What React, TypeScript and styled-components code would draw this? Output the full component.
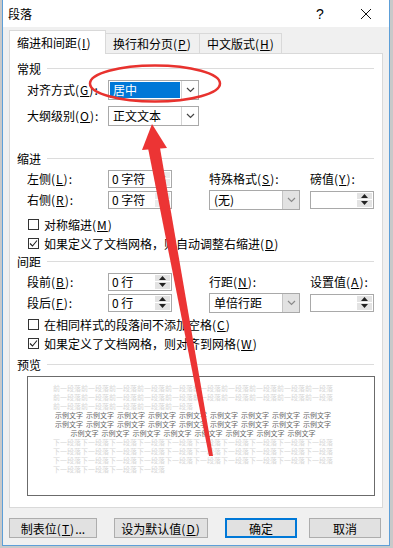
import React from "react";
import styled, { createGlobalStyle } from "styled-components";

const GlobalStyle = createGlobalStyle`
  html, body {
    margin: 0;
    padding: 0;
    background: #c9c9c9;
  }
  body {
    font-family: "Noto Sans CJK SC", "Noto Sans", sans-serif;
    font-size: 12px;
    color: #000;
  }
`;

const Stage = styled.div`
  position: relative;
  width: 393px;
  height: 548px;
  overflow: hidden;
`;

const Dialog = styled.div`
  margin-left: 2px;
  width: 386px;
  height: 545px;
  border: 1px solid #5d9fd8;
  border-top: none;
  background: #f0f0f0;
  display: flex;
  flex-direction: column;
`;

const TitleBar = styled.div`
  height: 27px;
  background: #fff;
  display: flex;
  align-items: center;
  padding-left: 5px;
`;

const Title = styled.div`
  flex: 1;
`;

const CaptionBtn = styled.div`
  width: 46px;
  height: 27px;
  display: flex;
  align-items: center;
  justify-content: center;
  font-size: 14px;
  font-family: "Liberation Sans", sans-serif;
`;

const TabBar = styled.div`
  display: flex;
  align-items: flex-end;
  padding: 3px 6px 0;
  height: 24px;
  margin-bottom: -1px;
  position: relative;
  z-index: 1;
`;

const Tab = styled.div<{ $w: number; $active?: boolean }>`
  width: ${(p) => p.$w}px;
  height: ${(p) => (p.$active ? 24 : 21)}px;
  box-sizing: border-box;
  padding-left: 7px;
  border: 1px solid #d9d9d9;
  border-bottom: ${(p) => (p.$active ? "none" : "1px solid #d9d9d9")};
  border-left: ${(p) => (p.$active ? "1px solid #d9d9d9" : "none")};
  background: ${(p) => (p.$active ? "#fff" : "#f0f0f0")};
  display: flex;
  align-items: center;
  white-space: nowrap;
`;

const Panel = styled.div`
  margin: 0 6px;
  height: 455px;
  box-sizing: border-box;
  border: 1px solid #d9d9d9;
  background: #fff;
  padding: 6px 8px 0 7px;
`;

const SectionHead = styled.div<{ $mt?: number }>`
  display: flex;
  align-items: center;
  gap: 6px;
  height: 16px;
  margin-top: ${(p) => p.$mt ?? 0}px;
  &::after {
    content: "";
    flex: 1;
    height: 1px;
    background: #dcdcdc;
  }
`;

const FieldGrid = styled.div<{ $gap?: number; $mt?: number }>`
  display: grid;
  grid-template-columns: 81px 101px 101px 64px;
  grid-auto-rows: 21px;
  row-gap: ${(p) => p.$gap ?? 0}px;
  align-items: center;
  padding-left: 10px;
  margin-top: ${(p) => p.$mt ?? 0}px;
`;

const Label = styled.div`
  white-space: nowrap;
`;

const Acc = styled.span`
  letter-spacing: 1px;
`;

const Combo = styled.div<{ $h: number }>`
  width: 91px;
  height: ${(p) => p.$h}px;
  box-sizing: border-box;
  border: 1px solid #a9a9a9;
  background: #fff;
  display: flex;
  align-items: center;
`;

const ComboText = styled.div<{ $sel?: boolean }>`
  flex: 1;
  align-self: stretch;
  margin: 1px;
  padding-left: 3px;
  display: flex;
  align-items: center;
  background: ${(p) => (p.$sel ? "#0078d7" : "transparent")};
  color: ${(p) => (p.$sel ? "#fff" : "#000")};
`;

const ComboArrow = styled.div<{ $filled?: boolean }>`
  width: 17px;
  align-self: stretch;
  box-sizing: border-box;
  border-left: 1px solid ${(p) => (p.$filled ? "#c4c4c4" : "#d4d4d4")};
  background: ${(p) => (p.$filled ? "#e2e2e2" : "#fff")};
  display: flex;
  align-items: center;
  justify-content: center;
`;

const Spin = styled.div`
  width: 64px;
  height: 18px;
  box-sizing: border-box;
  border: 1px solid #a9a9a9;
  background: #fff;
  display: flex;
`;

const SpinText = styled.div`
  flex: 1;
  padding-left: 3px;
  display: flex;
  align-items: center;
  white-space: pre;
`;

const SpinBtns = styled.div`
  width: 15px;
  margin: 1px;
  display: flex;
  flex-direction: column;
  gap: 1px;
`;

const SpinBtn = styled.div<{ $dim?: boolean }>`
  flex: 1;
  background: ${(p) => (p.$dim ? "#ebebeb" : "#e3e3e3")};
  display: flex;
  align-items: center;
  justify-content: center;
`;

const CheckRow = styled.div<{ $mt?: number }>`
  display: flex;
  align-items: center;
  gap: 5px;
  height: 19px;
  padding-left: 11px;
  margin-top: ${(p) => p.$mt ?? 0}px;
  white-space: nowrap;
`;

const Box = styled.span`
  width: 11px;
  height: 11px;
  box-sizing: border-box;
  border: 1px solid #333;
  background: #fff;
  display: flex;
  align-items: center;
  justify-content: center;
`;

const Preview = styled.div`
  margin: 4px 0 0 10px;
  width: 348px;
  height: 120px;
  box-sizing: border-box;
  border: 1px solid #6b6b6b;
  background: #fff;
  padding: 7px 0 0 25px;
`;

const PreviewText = styled.div`
  width: 280px;
  font-size: 7px;
  line-height: 9px;
  white-space: nowrap;
`;

const Ghost = styled.div`
  color: #d6d6d6;
`;

const Sample = styled.div`
  color: #666;
  text-align: center;
`;

const Word = styled.span`
  display: inline-block;
  margin: 0 1.5px;
`;

const ButtonRow = styled.div`
  display: flex;
  gap: 17px;
  margin-top: 10px;
  padding-left: 6px;
`;

const ButtonGroup = styled.div`
  display: flex;
  gap: 12px;
`;

const Button = styled.div<{ $w: number; $primary?: boolean }>`
  width: ${(p) => p.$w}px;
  height: 20px;
  box-sizing: border-box;
  border: 1px solid ${(p) => (p.$primary ? "#0078d7" : "#adadad")};
  box-shadow: ${(p) => (p.$primary ? "inset 0 0 0 1px #0078d7" : "none")};
  background: #e1e1e1;
  display: flex;
  align-items: center;
  justify-content: center;
  white-space: nowrap;
`;

const Overlay = styled.svg`
  position: absolute;
  left: 0;
  top: 0;
  pointer-events: none;
`;

const Key = ({ k }: { k: string }) => (
  <Acc>
    (<u>{k}</u>)
  </Acc>
);

const Chevron = ({ color }: { color: string }) => (
  <svg width="9" height="6" viewBox="0 0 9 6">
    <polyline points="1,1 4.5,4.5 8,1" fill="none" stroke={color} strokeWidth="1.2" />
  </svg>
);

const Dropdown = ({ text, h, sel, filled }: { text: string; h: number; sel?: boolean; filled?: boolean }) => (
  <Combo $h={h}>
    <ComboText $sel={sel}>{text}</ComboText>
    <ComboArrow $filled={filled}>
      <Chevron color={filled ? "#8a8a8a" : "#444"} />
    </ComboArrow>
  </Combo>
);

const Spinner = ({ text = "", dim }: { text?: string; dim?: boolean }) => {
  const c = dim ? "#b4b4b4" : "#222";
  return (
    <Spin>
      <SpinText>{text}</SpinText>
      <SpinBtns>
        <SpinBtn $dim={dim}>
          <svg width="7" height="4" viewBox="0 0 7 4">
            <polygon points="0,4 7,4 3.5,0" fill={c} />
          </svg>
        </SpinBtn>
        <SpinBtn $dim={dim}>
          <svg width="7" height="4" viewBox="0 0 7 4">
            <polygon points="0,0 7,0 3.5,4" fill={c} />
          </svg>
        </SpinBtn>
      </SpinBtns>
    </Spin>
  );
};

const Checkbox = ({ checked, children, mt }: { checked?: boolean; children: React.ReactNode; mt?: number }) => (
  <CheckRow $mt={mt}>
    <Box>
      {checked && (
        <svg width="9" height="9" viewBox="0 0 9 9">
          <polyline points="1,4.5 3.5,7 8,1.5" fill="none" stroke="#222" strokeWidth="1.1" />
        </svg>
      )}
    </Box>
    <span>{children}</span>
  </CheckRow>
);

const before = "前一段落".repeat(10);
const after = "下一段落".repeat(10);
const sampleRows = [9, 9, 8];

export default function App() {
  return (
    <Stage>
      <GlobalStyle />
      <Dialog>
        <TitleBar>
          <Title>段落</Title>
          <CaptionBtn>?</CaptionBtn>
          <CaptionBtn>
            <svg width="12" height="12" viewBox="0 0 12 12">
              <path d="M1 1 L11 11 M11 1 L1 11" stroke="#111" strokeWidth="1" />
            </svg>
          </CaptionBtn>
        </TitleBar>

        <TabBar>
          <Tab $w={97} $active>
            缩进和间距<Key k="I" />
          </Tab>
          <Tab $w={94}>
            换行和分页<Key k="P" />
          </Tab>
          <Tab $w={82}>
            中文版式<Key k="H" />
          </Tab>
        </TabBar>

        <Panel>
          <SectionHead>常规</SectionHead>
          <FieldGrid $gap={5} $mt={3}>
            <Label>
              对齐方式<Key k="G" />:
            </Label>
            <Dropdown text="居中" h={20} sel />
            <span />
            <span />
            <Label>
              大纲级别<Key k="O" />:
            </Label>
            <Dropdown text="正文文本" h={20} />
          </FieldGrid>

          <SectionHead $mt={24}>缩进</SectionHead>
          <FieldGrid $mt={2}>
            <Label>
              左侧<Key k="L" />:
            </Label>
            <Spinner text="0 字符" dim />
            <Label>
              特殊格式<Key k="S" />:
            </Label>
            <Label>
              磅值<Key k="Y" />:
            </Label>
            <Label>
              右侧<Key k="R" />:
            </Label>
            <Spinner text="0 字符" dim />
            <Dropdown text="(无)" h={20} filled />
            <Spinner />
          </FieldGrid>
          <Checkbox mt={5}>
            对称缩进<Key k="M" />
          </Checkbox>
          <Checkbox checked>
            如果定义了文档网格，则自动调整右缩进<Key k="D" />
          </Checkbox>

          <SectionHead>间距</SectionHead>
          <FieldGrid $mt={2}>
            <Label>
              段前<Key k="B" />:
            </Label>
            <Spinner text="0 行" />
            <Label>
              行距<Key k="N" />:
            </Label>
            <Label>
              设置值<Key k="A" />:
            </Label>
            <Label>
              段后<Key k="F" />:
            </Label>
            <Spinner text="0 行" />
            <Dropdown text="单倍行距" h={20} filled />
            <Spinner />
          </FieldGrid>
          <Checkbox mt={2}>
            在相同样式的段落间不添加空格<Key k="C" />
          </Checkbox>
          <Checkbox checked>
            如果定义了文档网格，则对齐到网格<Key k="W" />
          </Checkbox>

          <SectionHead $mt={3}>预览</SectionHead>
          <Preview>
            <PreviewText>
              <Ghost>{before}</Ghost>
              <Ghost>{before}</Ghost>
              <Ghost>{before.slice(0, 20)}</Ghost>
              {sampleRows.map((n, i) => (
                <Sample key={i}>
                  {Array.from({ length: n }).map((_, j) => (
                    <Word key={j}>示例文字</Word>
                  ))}
                </Sample>
              ))}
              <Ghost>{after}</Ghost>
              <Ghost>{after}</Ghost>
              <Ghost>{after}</Ghost>
              <Ghost>{after.slice(0, 16)}</Ghost>
            </PreviewText>
          </Preview>
        </Panel>

        <ButtonRow>
          <Button $w={88}>
            制表位<Key k="T" />...
          </Button>
          <Button $w={94}>
            设为默认值<Key k="D" />
          </Button>
          <ButtonGroup>
            <Button $w={72} $primary>
              确定
            </Button>
            <Button $w={72}>取消</Button>
          </ButtonGroup>
        </ButtonRow>
      </Dialog>

      <Overlay width="393" height="548" viewBox="0 0 393 548">
        <ellipse cx="155" cy="83.5" rx="65" ry="18" fill="none" stroke="#e8322e" strokeWidth="2.5" />
        <polygon points="152,124 142,150 167,148" fill="#ec3434" />
        <polygon points="148,148 160,148 213,456 209,456" fill="#ec3434" />
      </Overlay>
    </Stage>
  );
}
